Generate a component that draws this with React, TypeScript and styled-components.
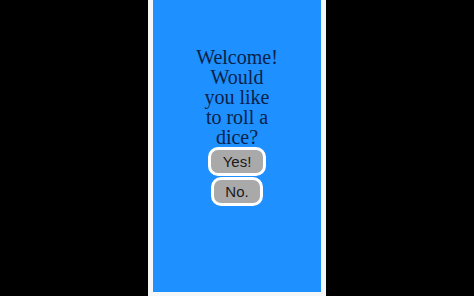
import React from 'react';
import styled, { createGlobalStyle } from 'styled-components';

const GlobalStyle = createGlobalStyle`
  html, body {
    margin: 0;
    padding: 0;
    background: #000;
  }
`;

const Frame = styled.div`
  box-sizing: border-box;
  width: 178px;
  height: 296px;
  margin: 0 auto;
  padding: 0 5px 4px;
  background: #f4f6f8;
`;

const Panel = styled.div`
  height: 100%;
  background: #1e90ff;
  display: flex;
  flex-direction: column;
  align-items: center;
  padding-top: 47px;
  box-sizing: border-box;
`;

const Title = styled.h1`
  margin: 0;
  width: 84px;
  text-align: center;
  font-family: 'Liberation Serif', serif;
  font-weight: normal;
  font-size: 20px;
  line-height: 20px;
  color: #0a2148;
`;

const Choice = styled.button<{ $wide?: boolean }>`
  box-sizing: border-box;
  width: ${(p) => (p.$wide ? '58px' : '52px')};
  height: 29px;
  margin-bottom: 1px;
  border: 3px solid #fff;
  border-radius: 10px;
  background: #a9a9a9;
  font-family: 'Liberation Sans', Arial, sans-serif;
  font-size: 15px;
  color: #1a1a1a;
  padding: 0;
`;

const App = () => {
  return (
    <>
      <GlobalStyle />
      <Frame>
        <Panel>
          <Title>Welcome! Would you like to roll a dice?</Title>
          <Choice $wide>Yes!</Choice>
          <Choice>No.</Choice>
        </Panel>
      </Frame>
    </>
  );
};

export default App;
